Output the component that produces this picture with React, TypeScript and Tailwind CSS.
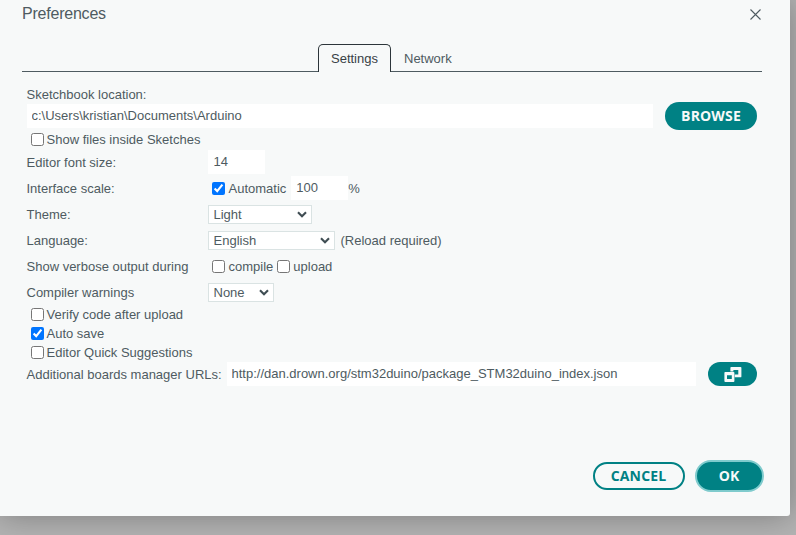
import type { ReactNode } from "react";

function Check({ label, checked = false, gap = "mr-[2.5px]" }: { label: string; checked?: boolean; gap?: string }) {
  return (
    <label className="flex items-center whitespace-nowrap">
      <input type="checkbox" defaultChecked={checked} className={"m-0 size-[13px] shrink-0 " + gap} />
      {label}
    </label>
  );
}

function Field({ value, className }: { value: string; className: string }) {
  return (
    <input
      type="text"
      defaultValue={value}
      className={"block h-6 border-0 bg-white pt-0 pb-px text-[#4e5b61] outline-none " + className}
    />
  );
}

function Select({ value, className }: { value: string; className: string }) {
  return (
    <div className={"relative h-[19px] " + className}>
      <select
        defaultValue={value}
        className="block h-full w-full appearance-none border border-[#dae3e3] bg-white p-0 pl-[4.5px] leading-[17px] text-[#4e5b61]"
      >
        <option>{value}</option>
      </select>
      <svg
        className="pointer-events-none absolute top-[6px] right-[5px] h-[7px] w-[10px]"
        viewBox="0 0 10 7"
        fill="none"
        stroke="#3f4d53"
        strokeWidth="2.1"
      >
        <path d="M1 1.2l4 4 4-4" />
      </svg>
    </div>
  );
}

function Row({ label, children }: { label: string; children: ReactNode }) {
  return (
    <div className="flex h-[26px] items-center">
      <div className="w-[181.5px] shrink-0 whitespace-nowrap">{label}</div>
      {children}
    </div>
  );
}

export default function App() {
  return (
    <div className="h-[535px] w-[796px] overflow-hidden bg-[#b3b3b3] font-['Liberation_Sans',Arial,sans-serif] text-[13px] leading-[19px] text-[#4e5b61]">
      <div className="flex h-[516px] w-[790px] flex-col rounded-br-[3px] bg-[#f7f9f9] pr-[28px] pl-[22px] shadow-[0_0_32px_0_rgba(0,0,0,0.31)]">
        <header className="flex h-[44px] items-start justify-between">
          <h1 className="pt-1 text-[16px] leading-[19px] tracking-[-0.22px]">Preferences</h1>
          <svg className="mt-[9px] mr-[1px] size-[11px]" viewBox="0 0 11 11" fill="none" stroke="#4e5b61" strokeWidth="1.1">
            <path d="M.5.5l10 10M10.5.5l-10 10" />
          </svg>
        </header>

        <nav className="flex h-[28px] w-[740px]">
          <div className="w-[296px] border-b border-[#4e5b61]" />
          <div className="flex w-[73px] justify-center rounded-t-[5px] border border-b-0 border-[#2c353a] pt-[4px] text-[#374146]">
            Settings
          </div>
          <div className="flex-1 border-b border-[#4e5b61] pt-[5px] pl-[13px]">Network</div>
        </nav>

        <main className="w-[735px] pt-[13px] pl-[4.5px]">
          <div>Sketchbook location:</div>
          <div className="flex h-6 items-center justify-between">
            <Field value="c:\Users\kristian\Documents\Arduino" className="w-[626.5px] pl-[5px]" />
            <button className="h-7 w-[92px] rounded-full bg-[#008184] pb-[2px] font-['Open_Sans',sans-serif] text-[14px] font-bold tracking-[0.15px] text-[#f7f9f9]">
              BROWSE
            </button>
          </div>
          <div className="flex h-[21px] items-center pt-[2px] pl-[4.5px]">
            <Check label="Show files inside Sketches" />
          </div>
          <Row label="Editor font size:">
            <Field value="14" className="w-[57px] pl-[5.5px]" />
          </Row>
          <Row label="Interface scale:">
            <div className="pl-1">
              <Check label="Automatic" checked gap="mr-[3.5px]" />
            </div>
            <Field value="100" className="ml-[4.5px] w-[57px] pl-[5.5px]" />
            <span className="ml-[0.5px]">%</span>
          </Row>
          <Row label="Theme:">
            <Select value="Light" className="w-[104px]" />
          </Row>
          <Row label="Language:">
            <Select value="English" className="w-[127px]" />
            <span className="ml-[5.5px]">(Reload required)</span>
          </Row>
          <Row label="Show verbose output during">
            <div className="flex gap-[3.5px] pl-1">
              <Check label="compile" gap="mr-[3.5px]" />
              <Check label="upload" gap="mr-[3.5px]" />
            </div>
          </Row>
          <Row label="Compiler warnings">
            <Select value="None" className="w-[66px]" />
          </Row>
          <div className="pl-[4.5px]">
            <Check label="Verify code after upload" />
            <Check label="Auto save" checked />
            <Check label="Editor Quick Suggestions" />
          </div>
          <div className="flex h-6 items-center">
            <span className="w-[200.5px] shrink-0 whitespace-nowrap">Additional boards manager URLs:</span>
            <Field value="http://dan.drown.org/stm32duino/package_STM32duino_index.json" className="w-[469px] pl-[4.5px]" />
            <button aria-label="Edit URLs" className="ml-3 flex h-6 w-[49px] items-center justify-center rounded-full bg-[#008184]">
              <svg className="size-[18px]" viewBox="0 0 18 18" fill="#f7f9f9" fillRule="evenodd">
                <path d="M7.3 1.9h9.2a.9.9 0 0 1 .9.9v8.6a.9.9 0 0 1-.9.9h-5.8V9.4h3.6V5H9.4v1.5h-3V2.8a.9.9 0 0 1 .9-.9z" />
                <path d="M1.3 6.9h8.2a.9.9 0 0 1 .9.9v8.3a.9.9 0 0 1-.9.9H1.3a.9.9 0 0 1-.9-.9V7.8a.9.9 0 0 1 .9-.9zM3 10.3v3.6h4.8v-3.6z" />
              </svg>
            </button>
          </div>
        </main>

        <footer className="mt-auto mr-[-2px] mb-6 flex h-8 items-center justify-end gap-[10px] font-['Open_Sans',sans-serif] text-[14px] font-bold tracking-[0.15px]">
          <button className="h-7 w-[92px] rounded-full border-2 border-[#008184] pr-px pb-[2px] text-[#008184]">CANCEL</button>
          <button className="h-8 w-[69px] rounded-full border-2 border-[#7fcbcd] bg-[#008184] pr-px pb-[2px] text-[#f7f9f9]">OK</button>
        </footer>
      </div>
    </div>
  );
}
